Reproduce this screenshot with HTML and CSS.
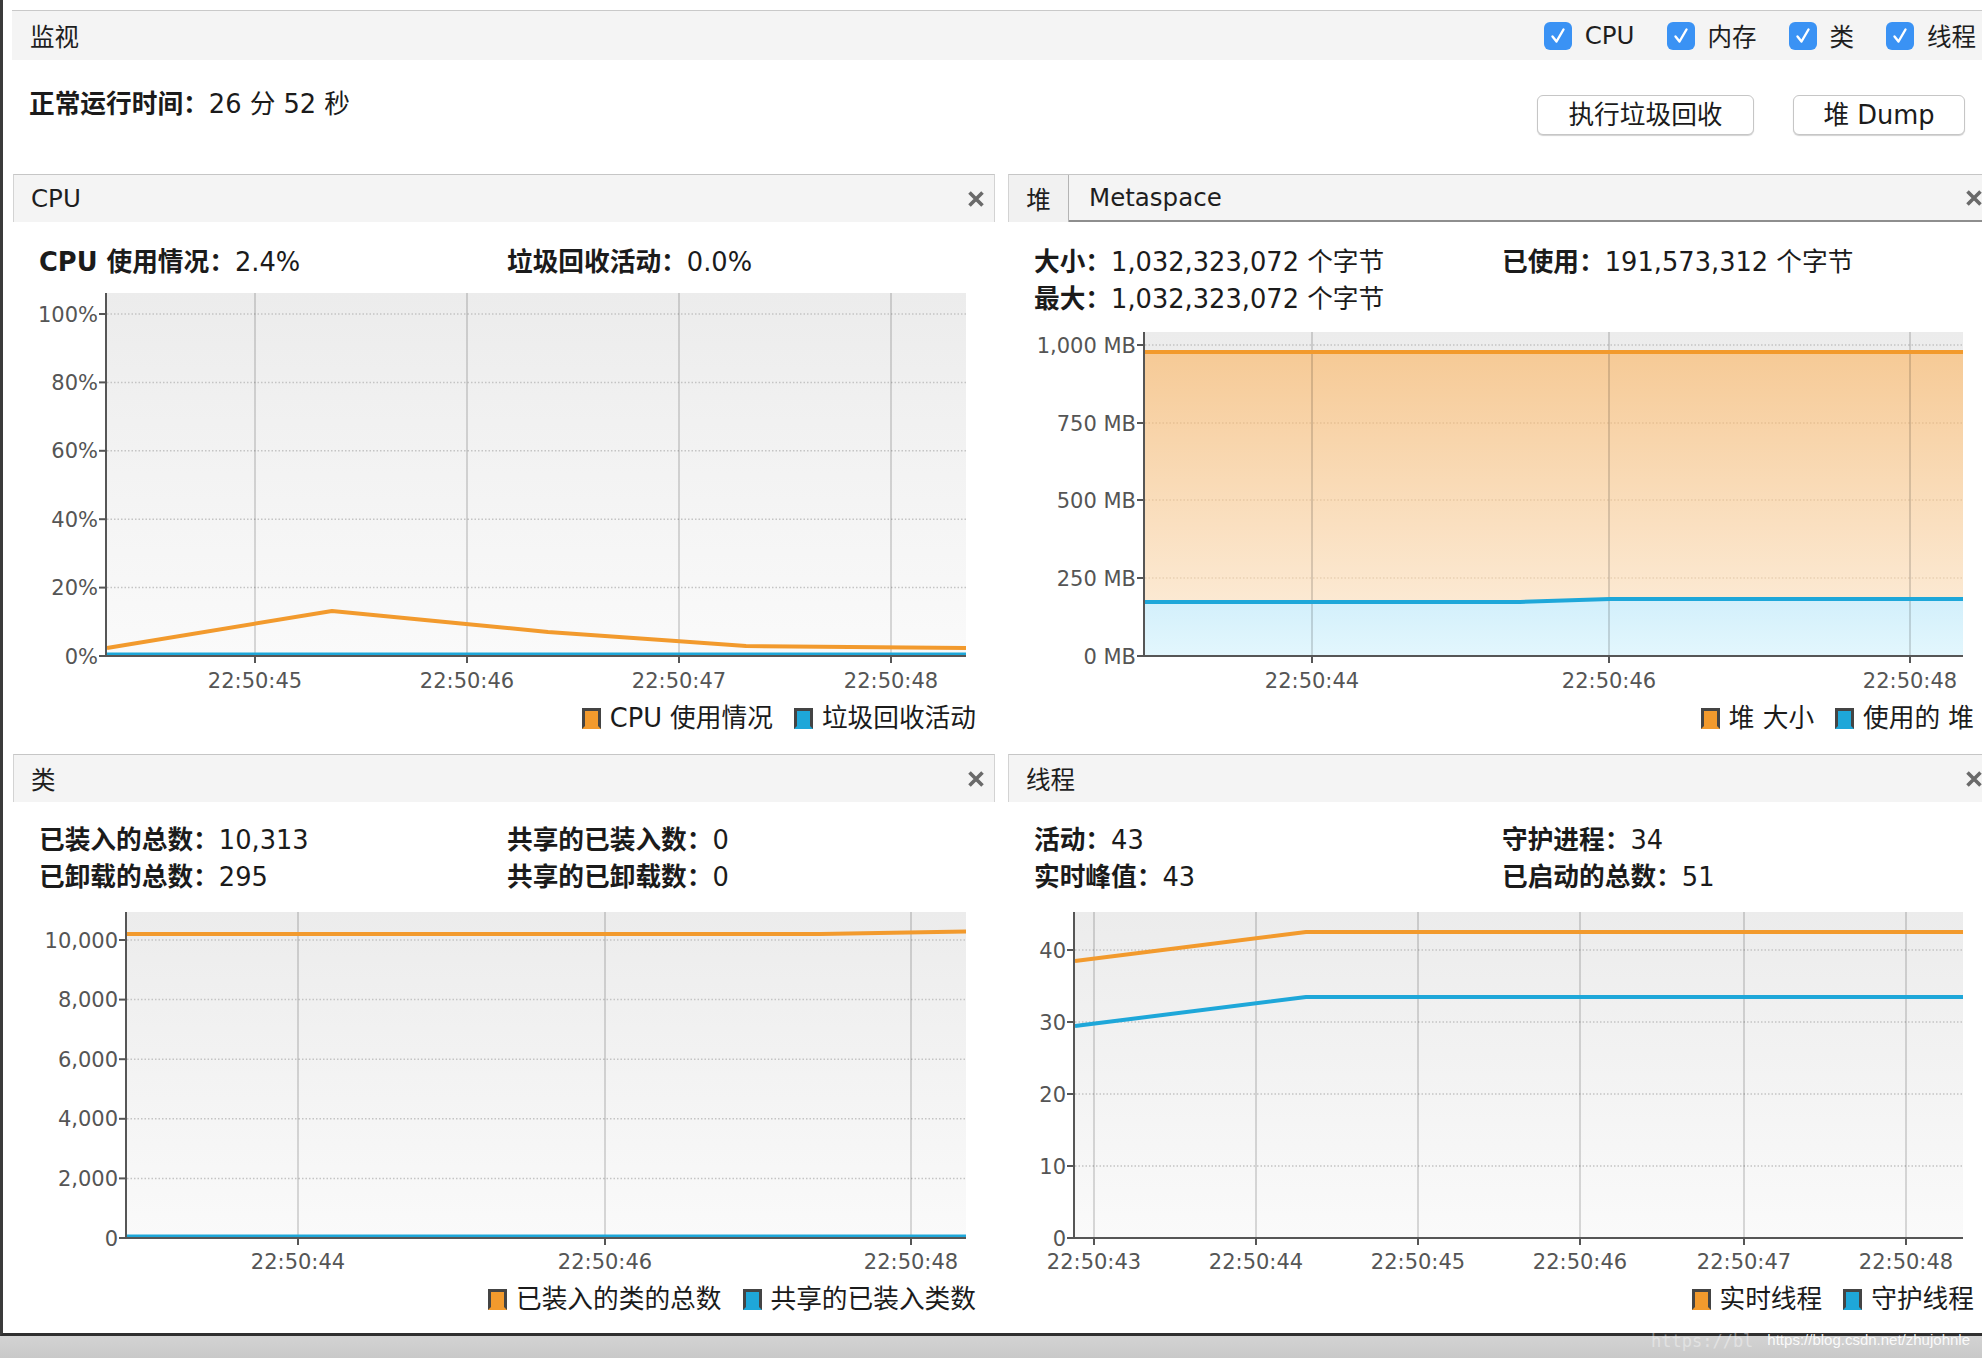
FILE: index.html
```html
<!DOCTYPE html>
<html lang="zh-CN">
<head>
<meta charset="utf-8">
<title>监视</title>
<link rel="stylesheet" href="styles.css">
</head>
<body>
<div class="app">
  <div class="window">
    <div class="monitor-bar">
      <span class="bar-title">监视</span>
      <div class="checks">
        <label class="check"><svg class="cb" viewBox="0 0 28 28" width="28" height="28"><rect class="cb-bg" width="28" height="28" rx="6"/><path class="cb-mark" d="M8.5 14.5 L12.5 19.5 L19.5 7.5"/></svg>CPU</label>
        <label class="check"><svg class="cb" viewBox="0 0 28 28" width="28" height="28"><rect class="cb-bg" width="28" height="28" rx="6"/><path class="cb-mark" d="M8.5 14.5 L12.5 19.5 L19.5 7.5"/></svg>内存</label>
        <label class="check"><svg class="cb" viewBox="0 0 28 28" width="28" height="28"><rect class="cb-bg" width="28" height="28" rx="6"/><path class="cb-mark" d="M8.5 14.5 L12.5 19.5 L19.5 7.5"/></svg>类</label>
        <label class="check"><svg class="cb" viewBox="0 0 28 28" width="28" height="28"><rect class="cb-bg" width="28" height="28" rx="6"/><path class="cb-mark" d="M8.5 14.5 L12.5 19.5 L19.5 7.5"/></svg>线程</label>
      </div>
    </div>

    <div class="summary">
      <div class="uptime"><b>正常运行时间：</b>26 分 52 秒</div>
      <div class="actions">
        <button class="btn btn-gc">执行垃圾回收</button>
        <button class="btn btn-dump">堆 Dump</button>
      </div>
    </div>

    <div class="panels">
      <!-- CPU -->
      <section class="panel panel-left">
        <div class="panel-head">
          <span class="head-title">CPU</span>
          <svg class="close" viewBox="0 0 16 16" width="16" height="16"><path d="M1.5 1.5 L14.5 14.5 M14.5 1.5 L1.5 14.5"/></svg>
        </div>
        <div class="stats stats-one">
          <div><b>CPU 使用情况：</b>2.4%</div>
          <div><b>垃圾回收活动：</b>0.0%</div>
        </div>
        <svg class="chart" viewBox="13 290 982 405" width="982" height="405">
          <defs>
            <linearGradient id="bg1" x1="0" y1="0" x2="0" y2="1"><stop offset="0" stop-color="#ececec"/><stop offset="1" stop-color="#fafafa"/></linearGradient>
          </defs>
          <rect x="106" y="293" width="860" height="363" fill="url(#bg1)"/>
          <g class="grid-h">
            <line x1="107" y1="314" x2="966" y2="314"/>
            <line x1="107" y1="382.4" x2="966" y2="382.4"/>
            <line x1="107" y1="450.8" x2="966" y2="450.8"/>
            <line x1="107" y1="519.2" x2="966" y2="519.2"/>
            <line x1="107" y1="587.6" x2="966" y2="587.6"/>
          </g>
          <g class="grid-v">
            <line x1="255" y1="293" x2="255" y2="656"/>
            <line x1="467" y1="293" x2="467" y2="656"/>
            <line x1="679" y1="293" x2="679" y2="656"/>
            <line x1="891" y1="293" x2="891" y2="656"/>
          </g>
          <polyline class="s-orange" points="107,648 332,611 466,624 548,632 676,641 746,646 966,648"/>
          <line class="s-blue" x1="107" y1="654.5" x2="966" y2="654.5"/>
          <g class="axis">
            <line x1="106" y1="293" x2="106" y2="657"/>
            <line x1="105" y1="656" x2="966" y2="656"/>
            <line x1="99" y1="314" x2="106" y2="314"/>
            <line x1="99" y1="382.4" x2="106" y2="382.4"/>
            <line x1="99" y1="450.8" x2="106" y2="450.8"/>
            <line x1="99" y1="519.2" x2="106" y2="519.2"/>
            <line x1="99" y1="587.6" x2="106" y2="587.6"/>
            <line x1="99" y1="656" x2="106" y2="656"/>
            <line x1="255" y1="656" x2="255" y2="663"/>
            <line x1="467" y1="656" x2="467" y2="663"/>
            <line x1="679" y1="656" x2="679" y2="663"/>
            <line x1="891" y1="656" x2="891" y2="663"/>
          </g>
          <g class="lbl lbl-y">
            <text x="98" y="321.5">100%</text>
            <text x="98" y="390">80%</text>
            <text x="98" y="458.3">60%</text>
            <text x="98" y="526.7">40%</text>
            <text x="98" y="595">20%</text>
            <text x="98" y="663.5">0%</text>
          </g>
          <g class="lbl lbl-x">
            <text x="255" y="688">22:50:45</text>
            <text x="467" y="688">22:50:46</text>
            <text x="679" y="688">22:50:47</text>
            <text x="891" y="688">22:50:48</text>
          </g>
        </svg>
        <div class="legend">
          <span class="key key-orange"></span><span class="key-text">CPU 使用情况</span>
          <span class="key key-blue"></span><span class="key-text">垃圾回收活动</span>
        </div>
      </section>

      <!-- Heap -->
      <section class="panel panel-right">
        <div class="panel-head tabs">
          <span class="tab tab-active">堆</span>
          <div class="tab-rest">
            <span class="tab-name">Metaspace</span>
            <svg class="close" viewBox="0 0 16 16" width="16" height="16"><path d="M1.5 1.5 L14.5 14.5 M14.5 1.5 L1.5 14.5"/></svg>
          </div>
        </div>
        <div class="stats stats-two">
          <div><b>大小：</b>1,032,323,072 个字节</div>
          <div><b>已使用：</b>191,573,312 个字节</div>
          <div><b>最大：</b>1,032,323,072 个字节</div>
          <div></div>
        </div>
        <svg class="chart" viewBox="1008 325 985 370" width="985" height="370">
          <defs>
            <linearGradient id="bg2" x1="0" y1="0" x2="0" y2="1"><stop offset="0" stop-color="#ececec"/><stop offset="1" stop-color="#fafafa"/></linearGradient>
            <linearGradient id="of2" x1="0" y1="0" x2="0" y2="1"><stop offset="0" stop-color="#f6ca96"/><stop offset="1" stop-color="#fdf0e0"/></linearGradient>
            <linearGradient id="bf2" x1="0" y1="0" x2="0" y2="1"><stop offset="0" stop-color="#d2effb"/><stop offset="1" stop-color="#e3f7fd"/></linearGradient>
          </defs>
          <rect x="1144" y="332" width="819" height="324" fill="url(#bg2)"/>
          <g class="grid-h">
            <line x1="1145" y1="345" x2="1963" y2="345"/>
          </g>
          <polygon points="1145,352 1963,352 1963,656 1145,656" fill="url(#of2)"/>
          <polygon points="1145,602 1520,602 1610,599 1963,599 1963,656 1145,656" fill="url(#bf2)"/>
          <g class="grid-h grid-soft">
            <line x1="1145" y1="423" x2="1963" y2="423"/>
            <line x1="1145" y1="500" x2="1963" y2="500"/>
            <line x1="1145" y1="578" x2="1963" y2="578"/>
          </g>
          <g class="grid-v">
            <line x1="1312" y1="332" x2="1312" y2="656"/>
            <line x1="1609" y1="332" x2="1609" y2="656"/>
            <line x1="1910" y1="332" x2="1910" y2="656"/>
          </g>
          <line class="s-orange" x1="1145" y1="352" x2="1963" y2="352"/>
          <polyline class="s-blue" points="1145,602 1520,602 1610,599 1963,599"/>
          <g class="axis">
            <line x1="1144" y1="332" x2="1144" y2="657"/>
            <line x1="1143" y1="656" x2="1963" y2="656"/>
            <line x1="1137" y1="345" x2="1144" y2="345"/>
            <line x1="1137" y1="423" x2="1144" y2="423"/>
            <line x1="1137" y1="500" x2="1144" y2="500"/>
            <line x1="1137" y1="578" x2="1144" y2="578"/>
            <line x1="1137" y1="656" x2="1144" y2="656"/>
            <line x1="1312" y1="656" x2="1312" y2="663"/>
            <line x1="1609" y1="656" x2="1609" y2="663"/>
            <line x1="1910" y1="656" x2="1910" y2="663"/>
          </g>
          <g class="lbl lbl-y">
            <text x="1136" y="352.5">1,000 MB</text>
            <text x="1136" y="430.5">750 MB</text>
            <text x="1136" y="507.5">500 MB</text>
            <text x="1136" y="585.5">250 MB</text>
            <text x="1136" y="663.5">0 MB</text>
          </g>
          <g class="lbl lbl-x">
            <text x="1312" y="688">22:50:44</text>
            <text x="1609" y="688">22:50:46</text>
            <text x="1910" y="688">22:50:48</text>
          </g>
        </svg>
        <div class="legend">
          <span class="key key-orange"></span><span class="key-text">堆 大小</span>
          <span class="key key-blue"></span><span class="key-text">使用的 堆</span>
        </div>
      </section>

      <!-- Classes -->
      <section class="panel panel-left">
        <div class="panel-head">
          <span class="head-title">类</span>
          <svg class="close" viewBox="0 0 16 16" width="16" height="16"><path d="M1.5 1.5 L14.5 14.5 M14.5 1.5 L1.5 14.5"/></svg>
        </div>
        <div class="stats stats-low">
          <div><b>已装入的总数：</b>10,313</div>
          <div><b>共享的已装入数：</b>0</div>
          <div><b>已卸载的总数：</b>295</div>
          <div><b>共享的已卸载数：</b>0</div>
        </div>
        <svg class="chart" viewBox="13 905 982 371" width="982" height="371">
          <defs>
            <linearGradient id="bg3" x1="0" y1="0" x2="0" y2="1"><stop offset="0" stop-color="#ececec"/><stop offset="1" stop-color="#fafafa"/></linearGradient>
          </defs>
          <rect x="126" y="912" width="840" height="326" fill="url(#bg3)"/>
          <g class="grid-h">
            <line x1="127" y1="940" x2="966" y2="940"/>
            <line x1="127" y1="999.6" x2="966" y2="999.6"/>
            <line x1="127" y1="1059.2" x2="966" y2="1059.2"/>
            <line x1="127" y1="1118.8" x2="966" y2="1118.8"/>
            <line x1="127" y1="1178.4" x2="966" y2="1178.4"/>
          </g>
          <g class="grid-v">
            <line x1="298" y1="912" x2="298" y2="1238"/>
            <line x1="605" y1="912" x2="605" y2="1238"/>
            <line x1="911" y1="912" x2="911" y2="1238"/>
          </g>
          <polyline class="s-orange" points="127,934 820,934 966,931.5"/>
          <line class="s-blue" x1="127" y1="1236.5" x2="966" y2="1236.5"/>
          <g class="axis">
            <line x1="126" y1="912" x2="126" y2="1239"/>
            <line x1="125" y1="1238" x2="966" y2="1238"/>
            <line x1="119" y1="940" x2="126" y2="940"/>
            <line x1="119" y1="999.6" x2="126" y2="999.6"/>
            <line x1="119" y1="1059.2" x2="126" y2="1059.2"/>
            <line x1="119" y1="1118.8" x2="126" y2="1118.8"/>
            <line x1="119" y1="1178.4" x2="126" y2="1178.4"/>
            <line x1="119" y1="1238" x2="126" y2="1238"/>
            <line x1="298" y1="1238" x2="298" y2="1245"/>
            <line x1="605" y1="1238" x2="605" y2="1245"/>
            <line x1="911" y1="1238" x2="911" y2="1245"/>
          </g>
          <g class="lbl lbl-y">
            <text x="118" y="947.5">10,000</text>
            <text x="118" y="1007">8,000</text>
            <text x="118" y="1066.7">6,000</text>
            <text x="118" y="1126.3">4,000</text>
            <text x="118" y="1186">2,000</text>
            <text x="118" y="1245.5">0</text>
          </g>
          <g class="lbl lbl-x">
            <text x="298" y="1269">22:50:44</text>
            <text x="605" y="1269">22:50:46</text>
            <text x="911" y="1269">22:50:48</text>
          </g>
        </svg>
        <div class="legend">
          <span class="key key-orange"></span><span class="key-text">已装入的类的总数</span>
          <span class="key key-blue"></span><span class="key-text">共享的已装入类数</span>
        </div>
      </section>

      <!-- Threads -->
      <section class="panel panel-right">
        <div class="panel-head">
          <span class="head-title">线程</span>
          <svg class="close" viewBox="0 0 16 16" width="16" height="16"><path d="M1.5 1.5 L14.5 14.5 M14.5 1.5 L1.5 14.5"/></svg>
        </div>
        <div class="stats stats-low">
          <div><b>活动：</b>43</div>
          <div><b>守护进程：</b>34</div>
          <div><b>实时峰值：</b>43</div>
          <div><b>已启动的总数：</b>51</div>
        </div>
        <svg class="chart" viewBox="1008 905 985 371" width="985" height="371">
          <defs>
            <linearGradient id="bg4" x1="0" y1="0" x2="0" y2="1"><stop offset="0" stop-color="#ececec"/><stop offset="1" stop-color="#fafafa"/></linearGradient>
          </defs>
          <rect x="1074" y="912" width="889" height="326" fill="url(#bg4)"/>
          <g class="grid-h">
            <line x1="1075" y1="950" x2="1963" y2="950"/>
            <line x1="1075" y1="1022" x2="1963" y2="1022"/>
            <line x1="1075" y1="1094" x2="1963" y2="1094"/>
            <line x1="1075" y1="1166" x2="1963" y2="1166"/>
          </g>
          <g class="grid-v">
            <line x1="1094" y1="912" x2="1094" y2="1238"/>
            <line x1="1256" y1="912" x2="1256" y2="1238"/>
            <line x1="1418" y1="912" x2="1418" y2="1238"/>
            <line x1="1580" y1="912" x2="1580" y2="1238"/>
            <line x1="1744" y1="912" x2="1744" y2="1238"/>
            <line x1="1906" y1="912" x2="1906" y2="1238"/>
          </g>
          <polyline class="s-orange" points="1075,961 1306,932 1963,932"/>
          <polyline class="s-blue" points="1075,1026 1306,997 1963,997"/>
          <g class="axis">
            <line x1="1074" y1="912" x2="1074" y2="1239"/>
            <line x1="1073" y1="1238" x2="1963" y2="1238"/>
            <line x1="1067" y1="950" x2="1074" y2="950"/>
            <line x1="1067" y1="1022" x2="1074" y2="1022"/>
            <line x1="1067" y1="1094" x2="1074" y2="1094"/>
            <line x1="1067" y1="1166" x2="1074" y2="1166"/>
            <line x1="1067" y1="1238" x2="1074" y2="1238"/>
            <line x1="1094" y1="1238" x2="1094" y2="1245"/>
            <line x1="1256" y1="1238" x2="1256" y2="1245"/>
            <line x1="1418" y1="1238" x2="1418" y2="1245"/>
            <line x1="1580" y1="1238" x2="1580" y2="1245"/>
            <line x1="1744" y1="1238" x2="1744" y2="1245"/>
            <line x1="1906" y1="1238" x2="1906" y2="1245"/>
          </g>
          <g class="lbl lbl-y">
            <text x="1066" y="957.5">40</text>
            <text x="1066" y="1029.5">30</text>
            <text x="1066" y="1101.5">20</text>
            <text x="1066" y="1173.5">10</text>
            <text x="1066" y="1245.5">0</text>
          </g>
          <g class="lbl lbl-x">
            <text x="1094" y="1269">22:50:43</text>
            <text x="1256" y="1269">22:50:44</text>
            <text x="1418" y="1269">22:50:45</text>
            <text x="1580" y="1269">22:50:46</text>
            <text x="1744" y="1269">22:50:47</text>
            <text x="1906" y="1269">22:50:48</text>
          </g>
        </svg>
        <div class="legend">
          <span class="key key-orange"></span><span class="key-text">实时线程</span>
          <span class="key key-blue"></span><span class="key-text">守护线程</span>
        </div>
      </section>
    </div>
  </div>
  <div class="statusbar">
    <span class="wm-ghost">https://bl</span>
    <span class="wm">https://blog.csdn.net/zhujohnle</span>
  </div>
</div>
</body>
</html>
```

FILE: styles.css
```css
* { box-sizing: border-box; }

html, body {
  margin: 0;
  padding: 0;
  width: 1982px;
  height: 1358px;
  overflow: hidden;
  background: #ffffff;
}

body {
  font-family: "DejaVu Sans", "Noto Sans CJK SC", sans-serif;
  font-size: 25.7px;
  color: #1b1b1b;
}

b { font-weight: bold; }

.app {
  display: flex;
  flex-direction: column;
  width: 1982px;
  height: 1358px;
}

.window {
  height: 1336px;
  flex: none;
  border-left: 3px solid #3b3b3b;
  border-bottom: 3px solid #2f2f2f;
  padding-top: 10px;
  background: #ffffff;
}

/* top bar */
.monitor-bar {
  margin-left: 9px;
  height: 50px;
  border-top: 1px solid #c9c9c9;
  background: #f4f4f4;
  display: flex;
  align-items: center;
  padding-left: 18px;
  padding-right: 6px;
}

.bar-title {
  font-size: 24.5px;
  color: #1e1e1e;
}

.checks {
  margin-left: auto;
  display: flex;
  align-items: center;
  gap: 32px;
}

.check {
  display: flex;
  align-items: center;
  gap: 13px;
  font-size: 24.5px;
  color: #1e1e1e;
}

.cb { display: block; }
.cb-bg { fill: #3a92f4; }
.cb-mark {
  fill: none;
  stroke: #ffffff;
  stroke-width: 2.4;
  stroke-linecap: round;
  stroke-linejoin: round;
}

/* summary row */
.summary {
  height: 114px;
  display: flex;
  justify-content: space-between;
  align-items: flex-start;
  padding-left: 26px;
  padding-right: 17px;
}

.uptime {
  margin-top: 29px;
  line-height: 30px;
}

.actions {
  margin-top: 35px;
  display: flex;
  gap: 39px;
}

.btn {
  height: 40px;
  border: 1px solid #c6c6c6;
  border-radius: 6px;
  background: #ffffff;
  box-shadow: 0 1px 1px rgba(0, 0, 0, 0.18);
  font-family: "DejaVu Sans", "Noto Sans CJK SC", sans-serif;
  font-size: 25.7px;
  color: #1b1b1b;
  padding: 0;
  line-height: 36px;
}

.btn-gc { width: 217px; }
.btn-dump { width: 172px; }

/* panels */
.panels {
  display: grid;
  grid-template-columns: 982px 985px;
  grid-template-rows: 566px 579px;
  column-gap: 13px;
  row-gap: 14px;
  padding-left: 10px;
}

.panel {
  display: flex;
  flex-direction: column;
  background: #ffffff;
}

.panel-head {
  height: 48px;
  flex: none;
  border-top: 1px solid #c6c6c6;
  border-left: 1px solid #d3d3d3;
  border-right: 1px solid #d3d3d3;
  background: #f4f4f4;
  display: flex;
  align-items: center;
  justify-content: space-between;
  padding: 0 10px 0 17px;
}

.head-title {
  font-size: 24.5px;
  color: #1e1e1e;
}

.close {
  display: block;
  flex: none;
}
.close path {
  stroke: #6a6a6a;
  stroke-width: 3.6;
  fill: none;
}

.tabs {
  padding: 0;
  align-items: stretch;
}

.tab {
  width: 60px;
  flex: none;
  display: flex;
  align-items: center;
  justify-content: center;
  font-size: 24.5px;
  color: #1e1e1e;
  border-right: 1px solid #b4b4b4;
  background: #f1f1f1;
}

.tab-rest {
  flex: 1;
  display: flex;
  align-items: center;
  justify-content: space-between;
  padding: 0 10px 0 20px;
  border-bottom: 2px solid #8e8e8e;
}

.tab-name {
  font-size: 24.5px;
  color: #1e1e1e;
}

.stats {
  display: grid;
  grid-template-columns: 468px auto;
  line-height: 37px;
  padding-left: 26px;
  white-space: nowrap;
}

.stats-one { padding-top: 22px; padding-bottom: 9px; }
.stats-two { padding-top: 22px; padding-bottom: 7px; }
.stats-low { padding-top: 20px; padding-bottom: 9px; }

.chart {
  display: block;
  flex: none;
  overflow: visible;
}

.grid-h line {
  stroke: #c4c4c4;
  stroke-width: 1.5;
  stroke-dasharray: 1.5 2;
}
.grid-soft line { stroke: rgba(150, 110, 60, 0.18); }

.grid-v line {
  stroke: rgba(0, 0, 0, 0.14);
  stroke-width: 2;
}

.axis line {
  stroke: #565656;
  stroke-width: 2;
}

.s-orange {
  fill: none;
  stroke: #f29a2d;
  stroke-width: 4;
  stroke-linejoin: round;
}

.s-blue {
  fill: none;
  stroke: #1ea7d9;
  stroke-width: 4;
  stroke-linejoin: round;
}

.lbl text {
  font-family: "DejaVu Sans", sans-serif;
  font-size: 21px;
  fill: #555555;
}
.lbl-y text { text-anchor: end; }
.lbl-x text { text-anchor: middle; }

.legend {
  display: flex;
  justify-content: flex-end;
  align-items: center;
  padding-top: 8px;
  padding-right: 19px;
  line-height: 30px;
  white-space: nowrap;
}

.key {
  width: 19px;
  height: 21px;
  border: 3px solid #444444;
  margin-right: 9px;
}
.key-blue { margin-left: 21px; background: #1ea7d9; border-bottom-color: #1ea7d9; }
.key-orange { background: #f29a2d; border-bottom-color: #f29a2d; }

.key-text { color: #1b1b1b; }

/* bottom strip */
.statusbar {
  flex: 1;
  position: relative;
  background: linear-gradient(#d3d3d3, #c9c9c9);
}

.wm-ghost {
  position: absolute;
  left: 1651px;
  top: -5px;
  font-family: "DejaVu Sans Mono", monospace;
  font-size: 17px;
  line-height: 20px;
  color: rgba(255, 255, 255, 0.4);
  white-space: nowrap;
}

.wm {
  position: absolute;
  right: 12px;
  top: -6px;
  font-family: "Liberation Sans", sans-serif;
  font-size: 15px;
  line-height: 20px;
  color: rgba(255, 255, 255, 0.92);
  white-space: nowrap;
}
```
